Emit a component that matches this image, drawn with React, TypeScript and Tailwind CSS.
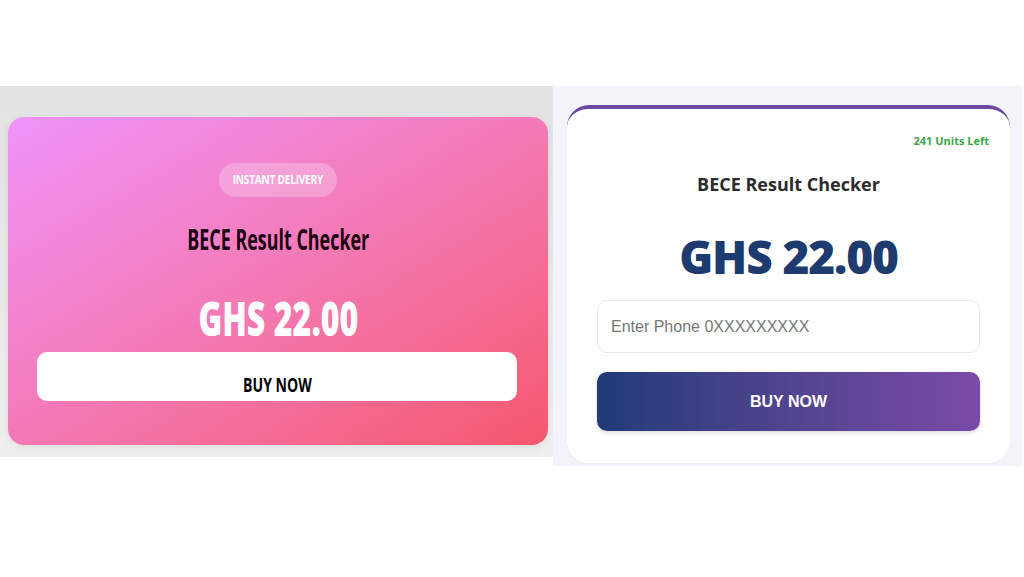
import React from "react";

function PinkCard() {
  return (
    <div className="w-[553px] h-[371px] bg-gradient-to-b from-[#e3e3e3] to-[#efefef] pl-[8px] pr-[5px] pt-[31px]">
      <div className="h-[328px] rounded-[16px] bg-gradient-to-br from-[#f093fb] to-[#f5576c] flex flex-col items-center pt-[46px] shadow-[0_2px_8px_rgba(0,0,0,0.08)]">
        <div className="h-[34px] w-[118px] rounded-full bg-white/25 flex items-center justify-center">
          <span className="inline-block scale-x-[0.78] text-[13px] font-bold text-white tracking-tight">INSTANT DELIVERY</span>
        </div>
        <h2 className="mt-[26px] leading-[32px] text-[28px] font-bold text-[#1a0010]">
          <span className="inline-block scale-x-[0.64]">BECE Result Checker</span>
        </h2>
        <div className="mt-[39px] leading-[48px] text-[48px] font-extrabold text-white">
          <span className="inline-block scale-x-[0.67]">GHS 22.00</span>
        </div>
        <button className="mt-[10px] ml-[29px] mr-[31px] self-stretch h-[49px] rounded-[10px] bg-white flex items-end justify-center pb-[4px]">
          <span className="inline-block scale-x-[0.74] text-[19px] font-bold text-black leading-[24px]">BUY NOW</span>
        </button>
      </div>
    </div>
  );
}

function WhiteCard() {
  return (
    <div className="flex-1 h-[380px] bg-[#f1f4f8] pl-[14px] pr-[12px] pt-[19px]">
      <div className="h-[358px] rounded-[22px] border-t-[4px] border-[#6b48a2] bg-white px-[30px] pt-[24px] flex flex-col shadow-[0_1px_3px_rgba(0,0,0,0.04)]">
        <div className="text-right -mr-[9px] text-[11px] font-bold text-[#3ba64a] leading-[16px]">241 Units Left</div>
        <h3 className="mt-[23px] text-center text-[18px] font-bold text-[#2b2b2b] leading-[24px]">BECE Result Checker</h3>
        <div className="mt-[32px] text-center text-[46px] font-extrabold text-[#1d3b6f] leading-[56px] tracking-tight">GHS 22.00</div>
        <input
          className="mt-[16px] h-[53px] rounded-[10px] border border-[#e6e8ec] bg-white px-[13px] text-[16px] text-[#555] placeholder:text-[#777] outline-none font-['Liberation_Sans',Arial,sans-serif]"
          placeholder="Enter Phone 0XXXXXXXXX"
        />
        <button className="mt-[19px] h-[59px] rounded-[10px] bg-gradient-to-r from-[#1f3b78] to-[#7b4aa8] text-white text-[16px] font-bold font-['Liberation_Sans',Arial,sans-serif] shadow-[0_2px_4px_rgba(0,0,0,0.15)]">
          BUY NOW
        </button>
      </div>
    </div>
  );
}

export default function App() {
  return (
    <div className="w-[1024px] h-[577px] bg-white pt-[86px] font-['Open_Sans',sans-serif]">
      <div className="flex items-start pr-[2px]">
        <PinkCard />
        <WhiteCard />
      </div>
    </div>
  );
}
